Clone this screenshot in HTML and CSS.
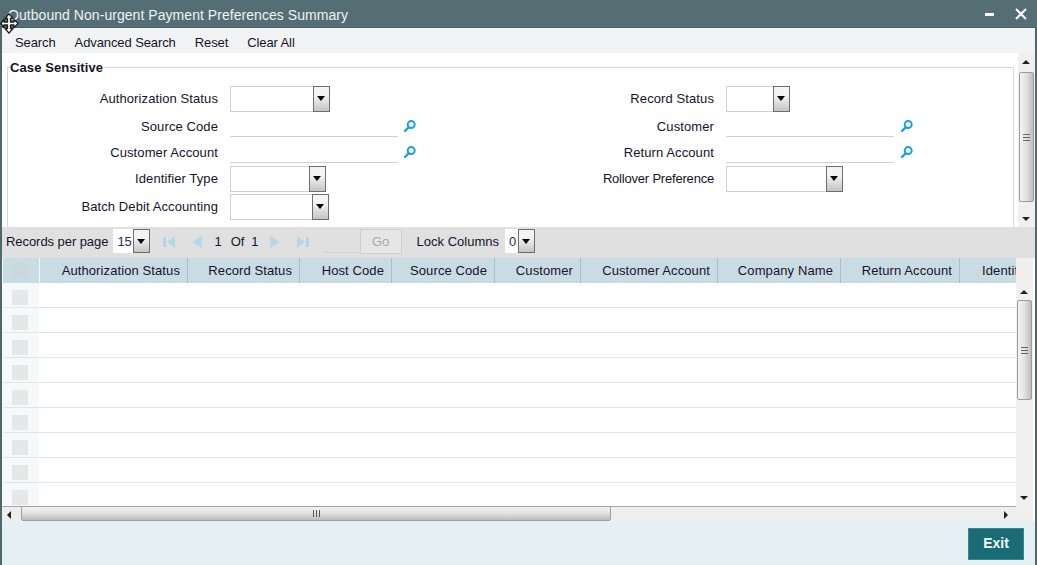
FILE: index.html
```html
<!DOCTYPE html>
<html lang="en">
<head>
<meta charset="utf-8">
<title>Outbound Non-urgent Payment Preferences Summary</title>
<link rel="stylesheet" href="styles.css">
</head>
<body>
<svg class="sprites" width="0" height="0" aria-hidden="true">
  <symbol id="lens" viewBox="0 0 12 12"><circle cx="7.2" cy="4.600" r="3.500" fill="none" stroke="#169ee6" stroke-width="2"/><path d="M4.600 7.400 1 11" stroke="#169ee6" stroke-width="2.200" stroke-linecap="round"/></symbol>
  <symbol id="first" viewBox="0 0 12 12"><path d="M0 1h3v10H0zM12 0v12L4 6z" fill="#b5d8e8"/></symbol>
  <symbol id="prev" viewBox="0 0 12 12"><path d="M11 0v12L1 6z" fill="#b5d8e8"/></symbol>
  <symbol id="next" viewBox="0 0 12 12"><path d="M1 0v12l10-6z" fill="#b5d8e8"/></symbol>
  <symbol id="last" viewBox="0 0 12 12"><path d="M12 1H9v10h3zM0 0v12l8-6z" fill="#b5d8e8"/></symbol>
</svg>
<div class="window">
  <header class="titlebar">
    <span class="title">Outbound Non-urgent Payment Preferences Summary</span>
    <span class="win-min"></span>
    <svg class="win-close" width="12" height="12" viewBox="0 0 12 12"><path d="M1 1l10 10M11 1 1 11" stroke="#fff" stroke-width="2"/></svg>
  </header>
  <svg class="move-cursor" width="19" height="21" viewBox="0 0 19 21"><path d="M9 .8 13 5.500H10.500V9H14V6.500L18.200 10.500 14 14.500V12H10.500V15.500H13L9 20.200 5 15.500H7.500V12H4V14.500L.8 10.500 4 6.500V9H7.500V5.500H5z" fill="#fff" stroke="#1c1c1c" stroke-width="1.300" stroke-linejoin="round"/></svg>
  <nav class="toolbar">
    <a>Search</a><a>Advanced Search</a><a>Reset</a><a>Clear All</a>
  </nav>
  <section class="form-area">
    <div class="form-scroll">
      <div class="fieldset">
        <span class="legend">Case Sensitive</span>
        <div class="form-grid">
          <label class="lbl">Authorization Status</label>
          <div class="ctl"><span class="sel w100"><i class="arrow"></i></span></div>
          <label class="lbl">Record Status</label>
          <div class="ctl"><span class="sel w64"><i class="arrow"></i></span></div>

          <label class="lbl low">Source Code</label>
          <div class="ctl"><span class="inp"></span><svg class="lens"><use href="#lens"/></svg></div>
          <label class="lbl low">Customer</label>
          <div class="ctl"><span class="inp"></span><svg class="lens far"><use href="#lens"/></svg></div>

          <label class="lbl low">Customer Account</label>
          <div class="ctl"><span class="inp"></span><svg class="lens"><use href="#lens"/></svg></div>
          <label class="lbl low">Return Account</label>
          <div class="ctl"><span class="inp"></span><svg class="lens far"><use href="#lens"/></svg></div>

          <label class="lbl">Identifier Type</label>
          <div class="ctl"><span class="sel w96"><i class="arrow"></i></span></div>
          <label class="lbl tight">Rollover Preference</label>
          <div class="ctl"><span class="sel w117"><i class="arrow"></i></span></div>

          <label class="lbl">Batch Debit Accounting</label>
          <div class="ctl"><span class="sel w99"><i class="arrow"></i></span></div>
        </div>
      </div>
    </div>
    <div class="vscroll form-vs">
      <i class="up"></i>
      <div class="vthumb thumb-form"><b></b></div>
      <i class="down"></i>
    </div>
  </section>
  <section class="pager">
    <span class="pg-label">Records per page</span>
    <span class="sel small w37"><em>15</em><i class="arrow"></i></span>
    <svg class="pg-ic first"><use href="#first"/></svg>
    <svg class="pg-ic prev"><use href="#prev"/></svg>
    <span class="pg-num">1</span><span class="pg-of">Of</span><span class="pg-num2">1</span>
    <svg class="pg-ic next"><use href="#next"/></svg>
    <svg class="pg-ic last"><use href="#last"/></svg>
    <span class="go-input"></span>
    <span class="go">Go</span>
    <span class="pg-lock">Lock Columns</span>
    <span class="sel small w30"><em>0</em><i class="arrow"></i></span>
  </section>
  <section class="grid">
    <div class="grid-line">
      <div class="head">
        <div class="hc c0"><span class="chk"></span></div>
        <div class="hc c1">Authorization Status</div>
        <div class="hc c2">Record Status</div>
        <div class="hc c3">Host Code</div>
        <div class="hc c4">Source Code</div>
        <div class="hc c5">Customer</div>
        <div class="hc c6">Customer Account</div>
        <div class="hc c7">Company Name</div>
        <div class="hc c8">Return Account</div>
        <div class="hc c9">Identifier Type</div>
      </div>
      <div class="corner"></div>
    </div>
    <div class="grid-body">
      <div class="rows">
        <div class="row"><span class="rc"><span class="chk"></span></span></div>
        <div class="row"><span class="rc"><span class="chk"></span></span></div>
        <div class="row"><span class="rc"><span class="chk"></span></span></div>
        <div class="row"><span class="rc"><span class="chk"></span></span></div>
        <div class="row"><span class="rc"><span class="chk"></span></span></div>
        <div class="row"><span class="rc"><span class="chk"></span></span></div>
        <div class="row"><span class="rc"><span class="chk"></span></span></div>
        <div class="row"><span class="rc"><span class="chk"></span></span></div>
        <div class="row"><span class="rc"><span class="chk"></span></span></div>
      </div>
      <div class="vscroll grid-vs">
        <i class="up"></i>
        <div class="vthumb thumb-grid"><b></b></div>
        <i class="down"></i>
      </div>
    </div>
    <div class="grid-line">
      <div class="hscroll">
        <i class="left"></i>
        <div class="hthumb"><b></b></div>
        <i class="right"></i>
      </div>
      <div class="corner"></div>
    </div>
  </section>
  <footer class="footer"><span class="exit">Exit</span></footer>
</div>
</body>
</html>
```
FILE: styles.css
```css
* { box-sizing: border-box; }
html, body { margin: 0; height: 100%; overflow: hidden; }
body { font-family: "Liberation Sans", Arial, sans-serif; font-size: 13px; color: #14142a; background: #fff; }
.sprites { position: absolute; }
.window { position: relative; width: 1037px; height: 565px; display: flex; flex-direction: column; border-left: 2px solid #4f686d; border-right: 2px solid #4f686d; background: #fff; }

.titlebar { height: 28px; margin: 0 -2px; padding: 2px 10px 0 8px; background: #546e73; color: #eef3f4; display: flex; align-items: center; flex: none; border-bottom: 1px solid #48606a; }
.title { flex: 1; font-size: 14px; white-space: nowrap; letter-spacing: .05px; }
.win-min { width: 9px; height: 3px; background: #fff; margin-right: 21px; }
.win-close { margin-bottom: 2px; }
.move-cursor { position: absolute; left: -2px; top: 13px; }

.toolbar { height: 25px; flex: none; background: #f2f3f5; display: flex; align-items: center; padding: 3px 0 0 13px; gap: 19px; letter-spacing: -.1px; }

.form-area { height: 174px; flex: none; display: flex; overflow: hidden; }
.form-scroll { flex: 1; padding: 14px 4px 0 5px; min-width: 0; }
.fieldset { position: relative; height: 200px; border: 1px solid #c8dde6; }
.legend { position: absolute; left: 2px; top: -8px; background: #fff; padding-right: 1px; font-weight: 700; line-height: 15px; letter-spacing: .1px; }
.form-grid { display: grid; grid-template-columns: 210px 286px 210px 1fr; grid-template-rows: 26px 25px 26px 29px 28px; padding-top: 18px; align-items: end; }
.lbl { text-align: right; white-space: nowrap; line-height: 16px; padding-bottom: 5px; letter-spacing: .1px; }
.lbl.low { padding-bottom: 2px; }
.lbl.tight { letter-spacing: -.2px; }
.ctl { display: flex; align-items: flex-end; padding-left: 12px; height: 100%; }
.sel { position: relative; display: inline-block; height: 26px; background: #fff; border: 1px solid #cfcfcf; flex: none; }
.sel.w100 { width: 100px; }
.sel.w64 { width: 64px; }
.sel.w96 { width: 96px; }
.sel.w117 { width: 117px; }
.sel.w99 { width: 99px; }
.arrow { position: absolute; right: -1px; top: -1px; bottom: -1px; width: 17px; border: 1px solid #6e6e6e; background: linear-gradient(#f4f4f4 35%, #c4c4c4); }
.arrow::after { content: ""; position: absolute; left: 3px; top: 9px; border: 4.500px solid transparent; border-top: 5px solid #000; border-bottom: 0; }
.inp { display: block; width: 168px; height: 25px; border-bottom: 1px solid #cfcfcf; }
.lens { width: 12px; height: 12px; margin: 0 0 5px 6px; flex: none; }
.lens.far { margin-left: 7px; }

.vscroll { position: relative; flex: none; width: 17px; background: #f0f0f0; }
.up, .down, .left, .right { position: absolute; width: 0; height: 0; border: 4px solid transparent; }
.up { left: 4px; top: 7px; border-bottom: 4px solid #222; border-top: 0; }
.down { left: 4px; bottom: 6px; border-top: 4px solid #222; border-bottom: 0; }
.vthumb { position: absolute; left: 1px; right: 1px; border: 1px solid #9c9c9c; border-radius: 2px; background: linear-gradient(90deg, #f4f4f4, #e4e4e4 45%, #bdbdbd); display: flex; align-items: center; justify-content: center; }
.vthumb b { width: 7px; height: 7px; border-top: 1px solid #666; border-bottom: 1px solid #666; background: linear-gradient(#666, #666) center / 100% 1px no-repeat; }
.thumb-form { top: 19px; height: 130px; }

.pager { height: 31px; flex: none; background: #e0e0e0; display: flex; align-items: center; padding-left: 4px; }
.pg-label { margin-right: 5px; letter-spacing: -.06px; }
.sel.small { height: 24px; border: 0; display: flex; align-items: center; margin-bottom: 3px; }
.sel.small em { font-style: normal; padding-left: 4px; color: #1c2c66; }
.sel.small .arrow { top: 0; bottom: 0; right: 0; }
.w37 { width: 37px; }
.w30 { width: 30px; }
.pg-ic { width: 12px; height: 12px; flex: none; margin-bottom: 2px; }
.first { margin-left: 13px; }
.prev { margin-left: 16px; }
.pg-num { margin-left: 11px; }
.pg-of { margin-left: 9px; }
.pg-num2 { margin-left: 7px; }
.next { margin-left: 10px; }
.last { margin-left: 16px; }
.go-input { width: 37px; height: 24px; margin-left: 14px; border-bottom: 1px solid #d4d4d4; margin-bottom: 3px; }
.go { width: 42px; height: 25px; margin-bottom: 3px; border: 1px solid #cfcfcf; background: #e6e6e6; color: #a9a9a9; display: flex; align-items: center; justify-content: center; }
.pg-lock { margin-left: 15px; margin-right: 6px; }
.pg-label, .pg-num, .pg-of, .pg-num2, .pg-lock { margin-bottom: 2px; }

.grid { flex: none; display: flex; flex-direction: column; }
.grid-line { display: flex; flex: none; }
.corner { width: 17px; flex: none; background: #f0efec; }
.head { height: 25px; margin-left: 1px; width: 1013px; display: flex; background: #c9dce3; overflow: hidden; flex: none; }
.hc { flex: none; height: 25px; line-height: 26px; text-align: right; padding-right: 7px; border-right: 1px solid #a9c0c9; white-space: nowrap; letter-spacing: .1px; }
.c0 { width: 37px; border-right: 1px solid #eef6f8; padding: 5px 0 0 9px; }
.c1 { width: 148px; }
.c2 { width: 112px; }
.c3 { width: 92px; }
.c4 { width: 103px; }
.c5 { width: 86px; }
.c6 { width: 137px; }
.c7 { width: 123px; }
.c8 { width: 119px; }
.c9 { width: 113px; }
.chk { display: block; width: 16px; height: 15px; background: #e6e8e8; }
.hc .chk { background: #c9d8dc; }
.grid-body { height: 223px; display: flex; flex: none; }
.rows { width: 1014px; flex: none; overflow: hidden; padding-left: 1px; }
.row { height: 25px; border-bottom: 1px solid #dfe6f0; }
.rc { display: block; width: 36px; height: 24px; background: #f6f9fa; padding: 7px 0 0 9px; }
.grid-vs { width: 17px; }
.thumb-grid { top: 17px; height: 100px; }
.hscroll { height: 15px; flex: none; position: relative; width: 1014px; background: #eeeeee; border-top: 1px solid #a8a8a8; }
.left { left: 5px; top: 4px; border-right: 4px solid #222; border-left: 0; }
.right { right: 8px; top: 4px; border-left: 4px solid #222; border-right: 0; }
.hthumb { position: absolute; left: 19px; top: -1px; width: 590px; height: 15px; border: 1px solid #a0a0a0; border-radius: 2px; background: linear-gradient(#f2f2f2, #e4e4e4 45%, #bcbcbc); display: flex; align-items: center; justify-content: center; }
.hthumb b { width: 7px; height: 7px; border-left: 1px solid #555; border-right: 1px solid #555; background: linear-gradient(#555, #555) center / 1px 100% no-repeat; }

.footer { flex: 1; background: #e4f0f2; display: flex; justify-content: flex-end; align-items: flex-start; padding: 7px 11px 0 0; }
.exit { width: 56px; height: 32px; padding-bottom: 2px; background: #1a6b75; border: 1px solid #2d8a94; color: #f2fafa; font-size: 14px; font-weight: 700; display: flex; align-items: center; justify-content: center; }
```
